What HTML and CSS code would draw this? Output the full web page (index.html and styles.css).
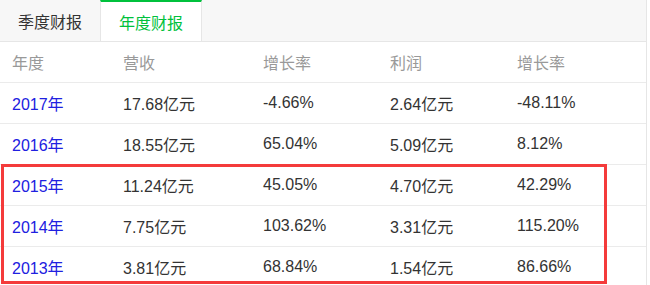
FILE: index.html
```html
<!DOCTYPE html>
<html lang="zh-CN">
<head>
<meta charset="utf-8">
<link rel="stylesheet" href="styles.css">
</head>
<body>
<div class="card">
  <div class="tabs">
    <div class="tab">季度财报</div>
    <div class="tab active">年度财报</div>
  </div>
  <div class="table">
    <div class="row head">
      <div class="cell">年度</div><div class="cell">营收</div><div class="cell">增长率</div><div class="cell">利润</div><div class="cell">增长率</div>
    </div>
    <div class="row">
      <div class="cell year">2017年</div><div class="cell">17.68亿元</div><div class="cell">-4.66%</div><div class="cell">2.64亿元</div><div class="cell">-48.11%</div>
    </div>
    <div class="row">
      <div class="cell year">2016年</div><div class="cell">18.55亿元</div><div class="cell">65.04%</div><div class="cell">5.09亿元</div><div class="cell">8.12%</div>
    </div>
    <div class="row">
      <div class="cell year">2015年</div><div class="cell">11.24亿元</div><div class="cell">45.05%</div><div class="cell">4.70亿元</div><div class="cell">42.29%</div>
    </div>
    <div class="row">
      <div class="cell year">2014年</div><div class="cell">7.75亿元</div><div class="cell">103.62%</div><div class="cell">3.31亿元</div><div class="cell">115.20%</div>
    </div>
    <div class="row">
      <div class="cell year">2013年</div><div class="cell">3.81亿元</div><div class="cell">68.84%</div><div class="cell">1.54亿元</div><div class="cell">86.66%</div>
    </div>
  </div>
  <div class="highlight"></div>
</div>
</body>
</html>
```
FILE: styles.css
```css
html, body {
  margin: 0;
  padding: 0;
  background: #fff;
}
body {
  font-family: "Liberation Sans", "Noto Sans CJK SC", sans-serif;
  font-size: 16px;
  color: #333;
}
.card {
  position: relative;
  width: 646px;
  border-right: 1px solid #e6e6e6;
  height: 285px;
  overflow: hidden;
}
.tabs {
  display: flex;
  height: 41px;
  background: #f7f7f7;
  border-bottom: 1px solid #e6e6e6;
}
.tab {
  width: 100px;
  display: flex;
  align-items: center;
  justify-content: center;
  color: #333;
  box-sizing: border-box;
}
.tab.active {
  width: 102px;
  background: #fff;
  color: #00c13c;
  border-left: 1px solid #e6e6e6;
  border-right: 1px solid #e6e6e6;
  border-top: 2px solid #00c13c;
}
.row {
  display: grid;
  grid-template-columns: 111px 140px 127px 127px 141px;
  height: 40px;
  border-bottom: 1px solid #ebebeb;
  align-items: center;
}
.cell {
  padding-left: 12px;
  white-space: nowrap;
}
.head .cell {
  color: #999;
}
.year {
  color: #2020e0;
}
.highlight {
  position: absolute;
  left: 1px;
  top: 164px;
  width: 606px;
  height: 120px;
  box-sizing: border-box;
  border: 3px solid #f43b3b;
}
```
